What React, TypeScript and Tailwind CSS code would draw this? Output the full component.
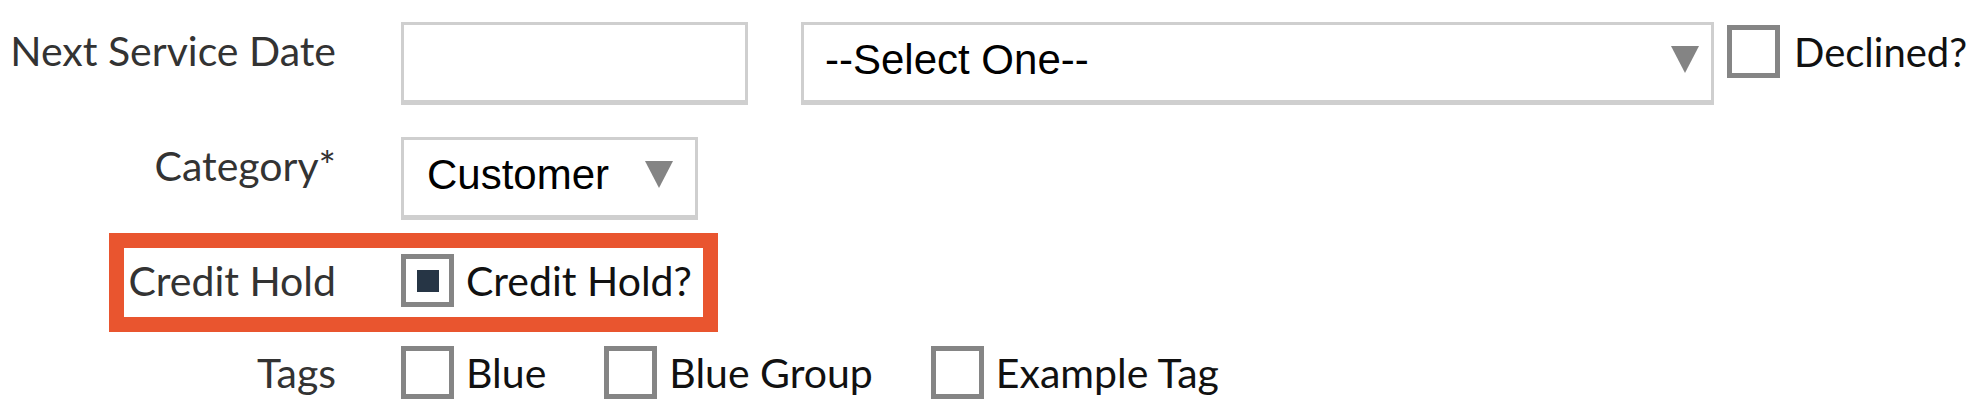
import React from 'react';

const labelFont = '[font-family:Lato,"Noto_Sans",sans-serif]';
const fieldFont = '[font-family:"Liberation_Sans",Arial,sans-serif]';

function Arrow() {
  return (
    <svg width="28" height="27" viewBox="0 0 28 27" className="shrink-0">
      <polygon points="0,0 28,0 14,27" fill="#848484" />
    </svg>
  );
}

function Checkbox({ checked = false }: { checked?: boolean }) {
  return (
    <div className="w-[53px] h-[53px] shrink-0 border-[5px] border-[#858585] bg-white flex items-center justify-center">
      {checked && <div className="w-[22px] h-[22px] bg-[#263545]" />}
    </div>
  );
}

function CheckItem({ label, checked = false }: { label: string; checked?: boolean }) {
  return (
    <label className="flex items-center gap-[12px]">
      <Checkbox checked={checked} />
      <span className={`${labelFont} text-[41px] leading-none text-[#111]`}>{label}</span>
    </label>
  );
}

export default function App() {
  return (
    <div className="w-[1980px] h-[406px] bg-white overflow-hidden pt-[22px]">
      {/* Next service date */}
      <div className="flex items-start">
        <div className={`w-[336px] shrink-0 text-right pt-[7px] ${labelFont} text-[41px] leading-[44px] text-[#333]`}>
          Next Service Date
        </div>
        <div className="ml-[65px] flex items-start">
          <div className="w-[347px] h-[83px] border-[3px] border-b-[5px] border-[#cfcfcf] bg-white" />
          <div className="ml-[53px] w-[913px] h-[83px] border-[3px] border-b-[5px] border-[#cfcfcf] bg-white flex items-center pl-[21px] pr-[12px] pb-[6px]">
            <span className={`${fieldFont} text-[42px] leading-none text-black`}>--Select One--</span>
            <span className="ml-auto">
              <Arrow />
            </span>
          </div>
          <div className="ml-[13px] mt-[3px] flex items-center gap-[14px]">
            <Checkbox />
            <span className={`${labelFont} text-[40px] leading-none text-[#111]`}>Declined?</span>
          </div>
        </div>
      </div>

      {/* Category */}
      <div className="flex items-start mt-[32px]">
        <div className={`w-[336px] shrink-0 text-right pt-[7px] ${labelFont} text-[41px] leading-[44px] text-[#333]`}>
          Category*
        </div>
        <div className="ml-[65px] w-[297px] h-[83px] border-[3px] border-b-[5px] border-[#cfcfcf] bg-white flex items-center pl-[23px] pr-[22px] pb-[6px]">
          <span className={`${fieldFont} text-[42px] leading-none text-black`}>Customer</span>
          <span className="ml-auto">
            <Arrow />
          </span>
        </div>
      </div>

      {/* Credit hold, highlighted */}
      <div className="mt-[13px] ml-[109px] w-[609px] border-[15px] border-[#e9552f] bg-white">
        <div className="flex items-center pt-[6px] pb-[10px]">
          <div className={`w-[212px] shrink-0 text-right ${labelFont} text-[41px] leading-none text-[#333]`}>
            Credit Hold
          </div>
          <div className="ml-[65px]">
            <CheckItem label="Credit Hold?" checked />
          </div>
        </div>
      </div>

      {/* Tags */}
      <div className="flex items-center mt-[14px]">
        <div className={`w-[336px] shrink-0 text-right ${labelFont} text-[41px] leading-none text-[#333]`}>
          Tags
        </div>
        <div className="ml-[65px] flex items-center gap-[58px]">
          <CheckItem label="Blue" />
          <CheckItem label="Blue Group" />
          <CheckItem label="Example Tag" />
        </div>
      </div>
    </div>
  );
}
